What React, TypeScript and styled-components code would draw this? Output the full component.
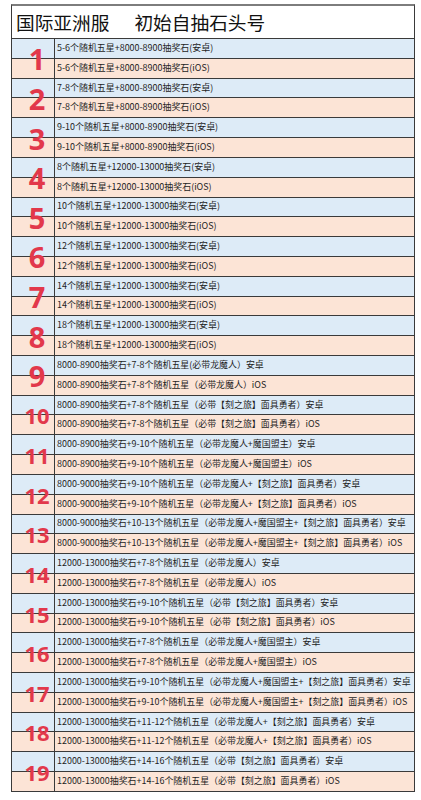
import styled, { createGlobalStyle } from "styled-components";

const GlobalStyle = createGlobalStyle`
    html, body {
        margin: 0;
        padding: 0;
        background: #ffffff;
    }
    body {
        font-family: "Noto Sans CJK SC", "Noto Sans", sans-serif;
    }
`;

const blue = "#ddebf7";
const pink = "#fce4d6";
const line = "#3a3a3a";

const Sheet = styled.div`
    margin: 4px 0 0 11px;
    width: 404px;
    box-sizing: border-box;
    border-left: 1px solid ${line};
    border-right: 1px solid ${line};
    border-top: 2px solid #7d7d7d;
    background: #fff;
`;

const TitleRow = styled.div`
    height: 33px;
    box-sizing: border-box;
    border-bottom: 1px solid ${line};
    display: flex;
    align-items: center;
    padding-left: 4px;
    font-size: 18.7px;
    color: #111;
    line-height: 1;
`;

const TitlePart = styled.span<{ $gap?: number }>`
    margin-left: ${(p) => p.$gap ?? 0}px;
`;

const Group = styled.div`
    position: relative;
`;

const Row = styled.div<{ $tone: string }>`
    display: grid;
    grid-template-columns: 43px 1fr;
    height: 19.815px;
    box-sizing: border-box;
    border-bottom: 1px solid ${line};
    background: ${(p) => p.$tone};
`;

const Lead = styled.div`
    border-right: 1px solid ${line};
`;

const Text = styled.div`
    display: flex;
    align-items: center;
    padding-left: 2px;
    font-size: 8.95px;
    color: #1e1e1e;
    white-space: nowrap;
    line-height: 1;
    min-width: 0;
`;

const Num = styled.div<{ $big: boolean }>`
    position: absolute;
    left: 0;
    top: 0;
    bottom: 0;
    width: 43px;
    padding-left: 7px;
    box-sizing: border-box;
    display: flex;
    align-items: center;
    justify-content: center;
    font-family: "Noto Sans", "Open Sans", sans-serif;
    font-weight: 700;
    font-size: ${(p) => (p.$big ? 29 : 22)}px;
    color: #e2384b;
    line-height: 1;
    pointer-events: none;
`;

const rows: [string, string][] = [
    ["5-6个随机五星+8000-8900抽奖石(安卓)", "5-6个随机五星+8000-8900抽奖石(iOS)"],
    ["7-8个随机五星+8000-8900抽奖石(安卓)", "7-8个随机五星+8000-8900抽奖石(iOS)"],
    ["9-10个随机五星+8000-8900抽奖石(安卓)", "9-10个随机五星+8000-8900抽奖石(iOS)"],
    ["8个随机五星+12000-13000抽奖石(安卓)", "8个随机五星+12000-13000抽奖石(iOS)"],
    ["10个随机五星+12000-13000抽奖石(安卓)", "10个随机五星+12000-13000抽奖石(iOS)"],
    ["12个随机五星+12000-13000抽奖石(安卓)", "12个随机五星+12000-13000抽奖石(iOS)"],
    ["14个随机五星+12000-13000抽奖石(安卓)", "14个随机五星+12000-13000抽奖石(iOS)"],
    ["18个随机五星+12000-13000抽奖石(安卓)", "18个随机五星+12000-13000抽奖石(iOS)"],
    ["8000-8900抽奖石+7-8个随机五星(必带龙魔人）安卓", "8000-8900抽奖石+7-8个随机五星（必带龙魔人）iOS"],
    ["8000-8900抽奖石+7-8个随机五星（必带【刻之旅】面具勇者）安卓", "8000-8900抽奖石+7-8个随机五星（必带【刻之旅】面具勇者）iOS"],
    ["8000-8900抽奖石+9-10个随机五星（必带龙魔人+魔国盟主）安卓", "8000-8900抽奖石+9-10个随机五星（必带龙魔人+魔国盟主）iOS"],
    ["8000-9000抽奖石+9-10个随机五星（必带龙魔人+【刻之旅】面具勇者）安卓", "8000-9000抽奖石+9-10个随机五星（必带龙魔人+【刻之旅】面具勇者）iOS"],
    ["8000-9000抽奖石+10-13个随机五星（必带龙魔人+魔国盟主+【刻之旅】面具勇者）安卓", "8000-9000抽奖石+10-13个随机五星（必带龙魔人+魔国盟主+【刻之旅】面具勇者）iOS"],
    ["12000-13000抽奖石+7-8个随机五星（必带龙魔人）安卓", "12000-13000抽奖石+7-8个随机五星（必带龙魔人）iOS"],
    ["12000-13000抽奖石+9-10个随机五星（必带【刻之旅】面具勇者）安卓", "12000-13000抽奖石+9-10个随机五星（必带【刻之旅】面具勇者）iOS"],
    ["12000-13000抽奖石+7-8个随机五星（必带龙魔人+魔国盟主）安卓", "12000-13000抽奖石+7-8个随机五星（必带龙魔人+魔国盟主）iOS"],
    ["12000-13000抽奖石+9-10个随机五星（必带龙魔人+魔国盟主+【刻之旅】面具勇者）安卓", "12000-13000抽奖石+9-10个随机五星（必带龙魔人+魔国盟主+【刻之旅】面具勇者）iOS"],
    ["12000-13000抽奖石+11-12个随机五星（必带龙魔人+【刻之旅】面具勇者）安卓", "12000-13000抽奖石+11-12个随机五星（必带龙魔人+【刻之旅】面具勇者）iOS"],
    ["12000-13000抽奖石+14-16个随机五星（必带【刻之旅】面具勇者）安卓", "12000-13000抽奖石+14-16个随机五星（必带【刻之旅】面具勇者）iOS"],
];

export default function App() {
    return (
        <>
            <GlobalStyle />
            <Sheet>
                <TitleRow>
                    <TitlePart>国际亚洲服</TitlePart>
                    <TitlePart $gap={25}>初始自抽石头号</TitlePart>
                </TitleRow>
                {rows.map(([android, ios], i) => (
                    <Group key={i}>
                        <Row $tone={blue}>
                            <Lead />
                            <Text>{android}</Text>
                        </Row>
                        <Row $tone={pink}>
                            <Lead />
                            <Text>{ios}</Text>
                        </Row>
                        <Num $big={i < 9}>{i + 1}</Num>
                    </Group>
                ))}
            </Sheet>
        </>
    );
}
